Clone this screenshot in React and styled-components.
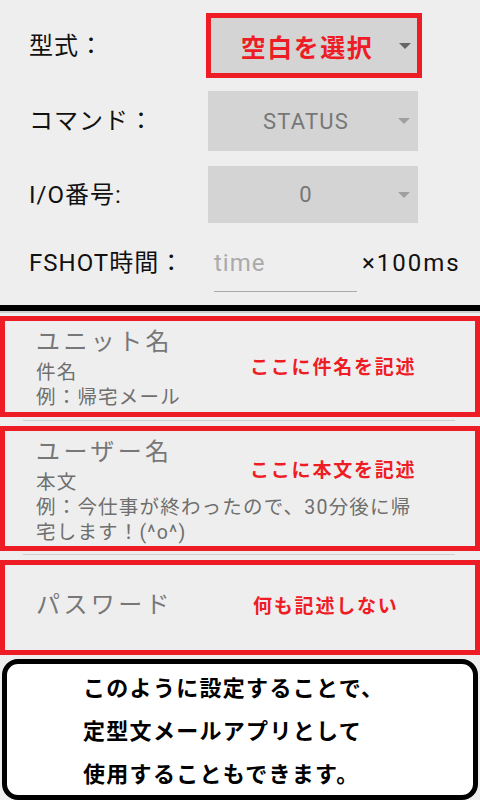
import React from 'react';
import styled, { createGlobalStyle } from 'styled-components';

const GlobalStyle = createGlobalStyle`
  html, body {
    margin: 0;
    padding: 0;
    background: #eeeeee;
  }
  body {
    font-family: Roboto, "Noto Sans CJK JP", sans-serif;
  }
`;

const Screen = styled.div`
  width: 480px;
  height: 800px;
  overflow: hidden;
  background: #eeeeee;
  display: flex;
  flex-direction: column;
`;

const Form = styled.div`
  display: flex;
  flex-direction: column;
  padding-top: 13px;
`;

const Row = styled.div`
  display: flex;
  align-items: ${(p) => (p.top ? 'flex-start' : 'center')};
  box-sizing: border-box;
  height: ${(p) => p.h}px;
  padding-top: ${(p) => p.pt || 0}px;
  margin-bottom: ${(p) => p.mb || 0}px;
`;

const Label = styled.div`
  width: 179px;
  padding-left: 29px;
  flex-shrink: 0;
  font-size: 24px;
  line-height: 30px;
  letter-spacing: 1px;
  color: #111;
  font-family: Roboto, "Noto Sans CJK JP", sans-serif;
  white-space: nowrap;
`;

const Spinner = styled.div`
  position: relative;
  box-sizing: border-box;
  width: ${(p) => (p.marked ? 216 : 210)}px;
  height: 100%;
  margin-left: ${(p) => (p.marked ? -2 : 0)}px;
  background: #d4d4d4;
  border: ${(p) => (p.marked ? '5px solid #ee1c24' : 'none')};
  display: flex;
  align-items: center;
  justify-content: center;
  padding-right: 14px;
`;

const SpinnerText = styled.span`
  font-size: ${(p) => (p.marked ? 25 : 22)}px;
  font-weight: ${(p) => (p.marked ? 700 : 400)};
  color: ${(p) => (p.marked ? '#ee1c24' : '#777')};
  letter-spacing: ${(p) => (p.marked ? 1.5 : 1.2)}px;
  font-family: Roboto, "Noto Sans CJK JP", sans-serif;
`;

const Arrow = styled.span`
  position: absolute;
  right: ${(p) => (p.marked ? 6 : 8)}px;
  top: 50%;
  margin-top: -3px;
  width: 0;
  height: 0;
  border-left: 6px solid transparent;
  border-right: 6px solid transparent;
  border-top: 6px solid ${(p) => (p.marked ? '#666' : '#a0a0a0')};
`;

const TimeField = styled.div`
  width: 143px;
  height: 44px;
  box-sizing: border-box;
  margin-left: 6px;
  border-bottom: 1px solid #aaa;
  font-size: 24px;
  line-height: 30px;
  letter-spacing: 1px;
  color: #aaa;
`;

const Unit = styled.div`
  margin-left: 5px;
  font-size: 24px;
  line-height: 30px;
  letter-spacing: 2px;
  color: #111;
`;

const Divider = styled.div`
  height: 6px;
  background: #000;
  border-bottom: 2px solid #cfcfcf;
  margin-bottom: 3px;
`;

const NoteBox = styled.div`
  position: relative;
  box-sizing: border-box;
  width: 480px;
  min-height: ${(p) => p.h}px;
  border: 5px solid #ee1c24;
  padding: ${(p) => p.pt}px 0 2px 31px;
  display: flex;
  flex-direction: column;
`;

const Sep = styled.div`
  height: 1px;
  background: #cfcfcf;
  margin: 3px 25px 5px 23px;
`;

const FieldTitle = styled.div`
  font-size: 24px;
  line-height: 30px;
  letter-spacing: 3.4px;
  color: #777;
  font-family: "Noto Sans CJK JP", sans-serif;
`;

const FieldLines = styled.div`
  margin-top: 5px;
  font-size: 19.5px;
  line-height: 25px;
  letter-spacing: 1.2px;
  color: #6f6f6f;
  font-family: Roboto, "Noto Sans CJK JP", sans-serif;
  width: 386px;
`;

const Annotation = styled.div`
  position: absolute;
  left: ${(p) => p.x}px;
  top: ${(p) => p.y}px;
  font-size: 19px;
  font-weight: 700;
  letter-spacing: 1.8px;
  color: #ee1c24;
  font-family: "Noto Sans CJK JP", sans-serif;
  line-height: 24px;
`;

const Callout = styled.div`
  box-sizing: border-box;
  margin: 4px 2px 0 2px;
  height: 142px;
  background: #fff;
  border: 5px solid #000;
  border-radius: 16px;
  padding: 1px 0 0 76px;
`;

const CalloutLine = styled.div`
  font-size: 22px;
  font-weight: 700;
  line-height: 43px;
  letter-spacing: 1.3px;
  color: #000;
  font-family: "Noto Sans CJK JP", sans-serif;
`;

const App = () => {
  return (
    <>
      <GlobalStyle />
      <Screen>
        <Form>
          <Row h={65} mb={13}>
            <Label>型式：</Label>
            <Spinner marked>
              <SpinnerText marked>空白を選択</SpinnerText>
              <Arrow marked />
            </Spinner>
          </Row>
          <Row h={60} mb={15}>
            <Label>コマンド：</Label>
            <Spinner>
              <SpinnerText>STATUS</SpinnerText>
              <Arrow />
            </Spinner>
          </Row>
          <Row h={57}>
            <Label>I/O番号:</Label>
            <Spinner>
              <SpinnerText>0</SpinnerText>
              <Arrow />
            </Spinner>
          </Row>
          <Row h={82} top pt={25}>
            <Label>FSHOT時間：</Label>
            <TimeField>time</TimeField>
            <Unit>×100ms</Unit>
          </Row>
        </Form>
        <Divider />
        <NoteBox h={101} pt={4}>
          <FieldTitle>ユニット名</FieldTitle>
          <FieldLines>
            件名
            <br />
            例：帰宅メール
          </FieldLines>
          <Annotation x={245} y={33}>ここに件名を記述</Annotation>
        </NoteBox>
        <Sep />
        <NoteBox h={124} pt={4}>
          <FieldTitle>ユーザー名</FieldTitle>
          <FieldLines>
            本文
            <br />
            例：今仕事が終わったので、30分後に帰宅します！(^o^)
          </FieldLines>
          <Annotation x={245} y={26}>ここに本文を記述</Annotation>
        </NoteBox>
        <Sep />
        <NoteBox h={95} pt={23}>
          <FieldTitle>パスワード</FieldTitle>
          <Annotation x={248} y={28}>何も記述しない</Annotation>
        </NoteBox>
        <Callout>
          <CalloutLine>このように設定することで、</CalloutLine>
          <CalloutLine>定型文メールアプリとして</CalloutLine>
          <CalloutLine>使用することもできます。</CalloutLine>
        </Callout>
      </Screen>
    </>
  );
};

export default App;
